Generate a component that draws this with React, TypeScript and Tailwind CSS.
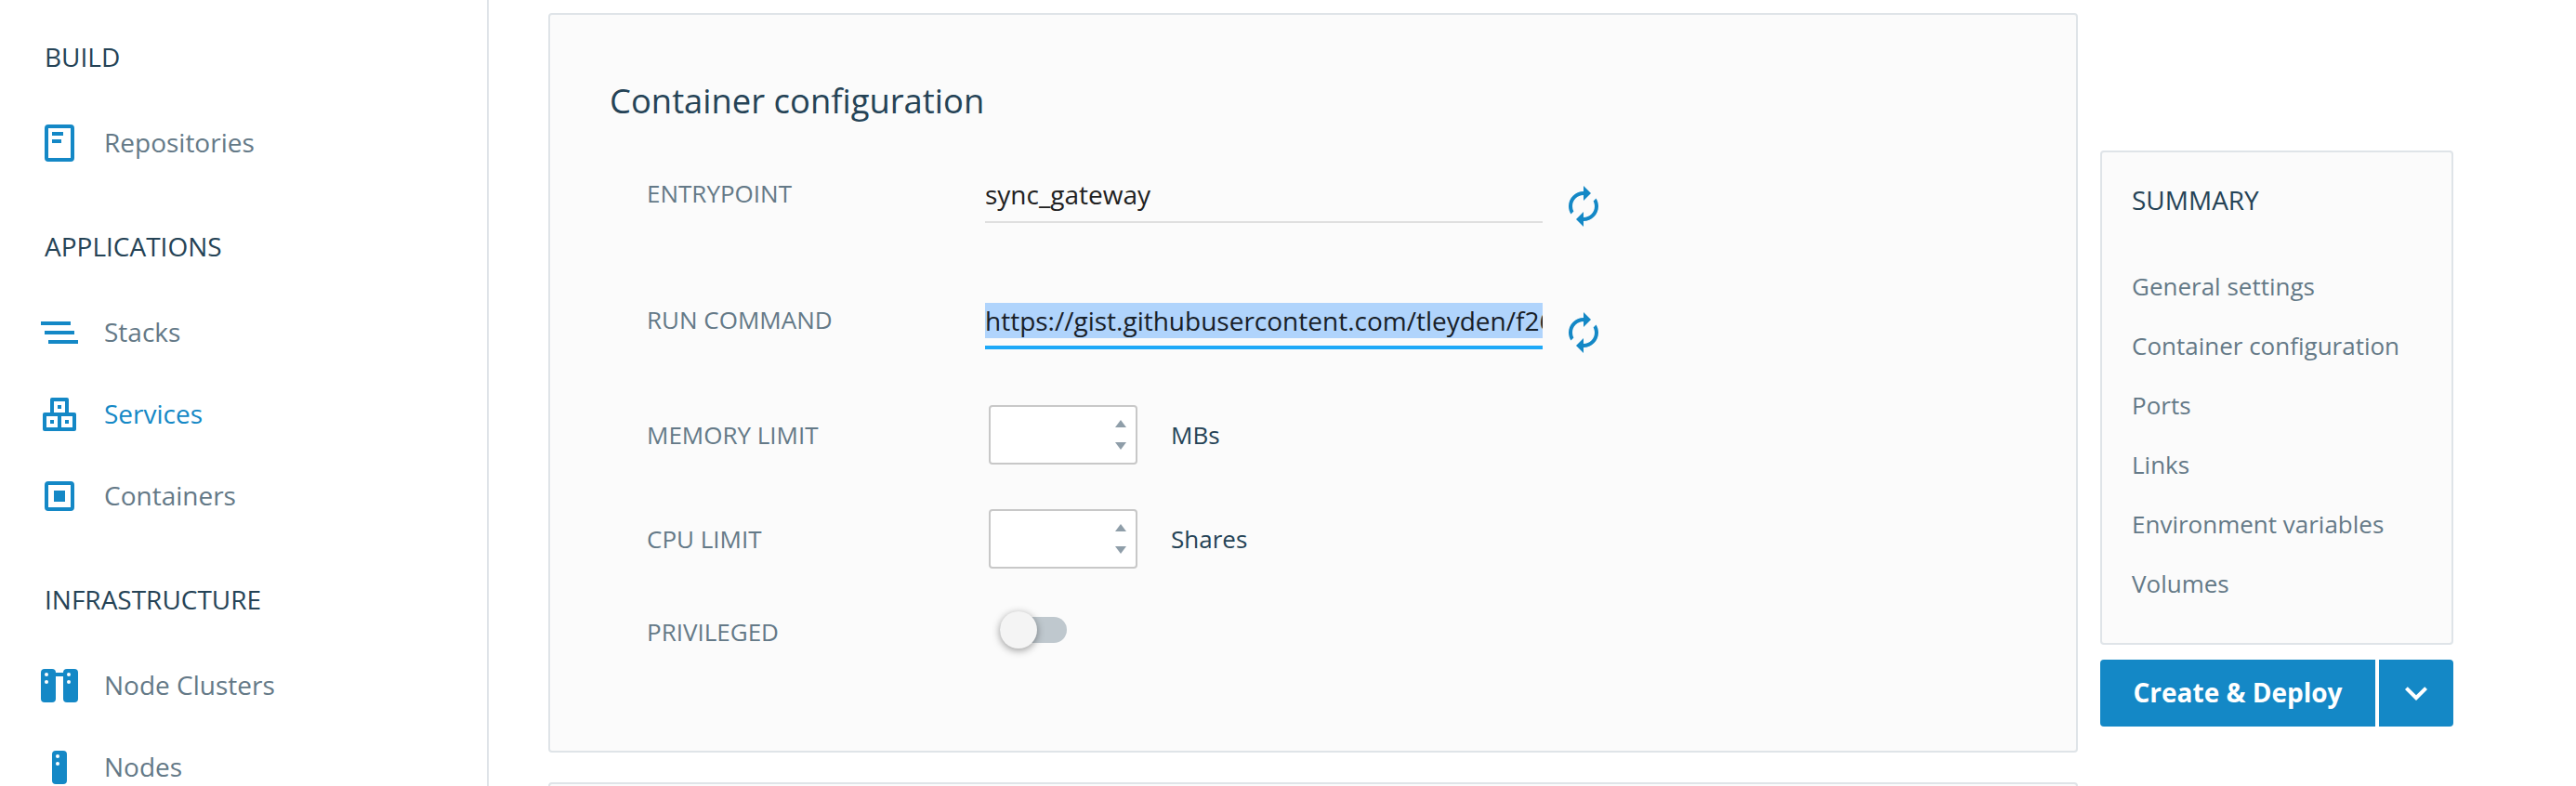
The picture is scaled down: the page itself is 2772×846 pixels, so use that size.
import type { ReactNode } from "react";

type NavItem = { label: string; icon: ReactNode; active?: boolean };
type NavSection = { title: string; items: NavItem[] };

function Icon({ children }: { children: ReactNode }) {
  return (
    <svg viewBox="0 0 40 40" className="size-10 shrink-0 fill-[#1488c6]">
      {children}
    </svg>
  );
}

const RepositoryIcon = (
  <Icon>
    <rect x="6" y="2" width="28" height="36" rx="2" fill="none" stroke="#1488c6" strokeWidth="4" />
    <rect x="12" y="8" width="12" height="4" />
    <rect x="12" y="16" width="10" height="4" />
  </Icon>
);

const StackIcon = (
  <Icon>
    <rect x="0" y="8" width="32" height="4" />
    <rect x="4" y="18" width="32" height="4" />
    <rect x="8" y="28" width="32" height="4" />
  </Icon>
);

const ServiceIcon = (
  <Icon>
    <rect x="10" y="2" width="20" height="22" rx="2" />
    <rect x="2" y="18" width="36" height="20" rx="2" />
    <path fill="#fff" d="M14 6h12v12H14zM6 22h12v12H6zM22 22h12v12H22z" />
    <path d="M18 10h4v4h-4zM10 26h4v4h-4zM26 26h4v4h-4z" />
  </Icon>
);

const ContainerIcon = (
  <Icon>
    <rect x="6" y="6" width="28" height="28" rx="2" fill="none" stroke="#1488c6" strokeWidth="4" />
    <rect x="14" y="14" width="12" height="12" />
  </Icon>
);

const ClusterIcon = (
  <Icon>
    <rect x="0" y="2" width="16" height="36" rx="4" />
    <rect x="24" y="2" width="16" height="36" rx="4" />
    <rect x="14" y="6" width="12" height="4" />
    <g fill="#fff">
      <circle cx="6" cy="8" r="2" />
      <circle cx="6" cy="16" r="2" />
      <circle cx="30" cy="8" r="2" />
      <circle cx="30" cy="16" r="2" />
    </g>
  </Icon>
);

const NodeIcon = (
  <Icon>
    <rect x="12" y="2" width="16" height="36" rx="4" />
    <circle cx="18" cy="8" r="2" fill="#fff" />
    <circle cx="18" cy="16" r="2" fill="#fff" />
  </Icon>
);

const sections: NavSection[] = [
  { title: "BUILD", items: [{ label: "Repositories", icon: RepositoryIcon }] },
  {
    title: "APPLICATIONS",
    items: [
      { label: "Stacks", icon: StackIcon },
      { label: "Services", icon: ServiceIcon, active: true },
      { label: "Containers", icon: ContainerIcon },
    ],
  },
  {
    title: "INFRASTRUCTURE",
    items: [
      { label: "Node Clusters", icon: ClusterIcon },
      { label: "Nodes", icon: NodeIcon },
    ],
  },
];

const summaryLinks = [
  "General settings",
  "Container configuration",
  "Ports",
  "Links",
  "Environment variables",
  "Volumes",
];

function Sidebar() {
  return (
    <nav className="h-full w-[526px] shrink-0 overflow-hidden border-r-2 border-[#dfe3e8] pt-[41px]">
      {sections.map((section) => (
        <section key={section.title} className="mb-[47px]">
          <h2 className="mb-[29px] pl-12 text-[28px] leading-10 text-[#254356]">{section.title}</h2>
          <ul>
            {section.items.map((item) => (
              <li
                key={item.label}
                className={`flex h-[88px] items-center gap-7 pl-11 text-[28px] ${
                  item.active ? "text-[#1488c6]" : "text-[#647987]"
                }`}
              >
                {item.icon}
                <a className="pb-0.5 leading-10">{item.label}</a>
              </li>
            ))}
          </ul>
        </section>
      ))}
    </nav>
  );
}

function Label({ children }: { children: ReactNode }) {
  return <label className="w-[364px] shrink-0 text-[26px] leading-9 text-[#647987]">{children}</label>;
}

function ResetButton() {
  return (
    <button className="mt-2 ml-5 size-12">
      <svg viewBox="0 0 24 24" className="size-12 fill-[#1488c6]">
        <path d="M12 6v3l4-4-4-4v3c-4.42 0-8 3.58-8 8 0 1.57.46 3.03 1.24 4.26L6.7 14.8A5.87 5.87 0 0 1 6 12c0-3.31 2.69-6 6-6zm6.76 1.74L17.3 9.2c.44.84.7 1.79.7 2.8 0 3.31-2.69 6-6 6v-3l-4 4 4 4v-3c4.42 0 8-3.58 8-8 0-1.57-.46-3.03-1.24-4.26z" />
      </svg>
    </button>
  );
}

function NumberField({ unit }: { unit: string }) {
  return (
    <>
      <div className="ml-1 flex h-16 w-40 items-center justify-end rounded border-2 border-[#c8c8c8] bg-white pr-2.5">
        <svg viewBox="0 0 12 32" className="h-8 w-3 fill-[#8f9ea9]">
          <path d="M6 0l6 8H0zM0 24h12l-6 8z" />
        </svg>
      </div>
      <span className="ml-9 text-[26px] leading-9 text-[#254356]">{unit}</span>
    </>
  );
}

function ConfigCard() {
  return (
    <section className="h-[796px] shrink-0 rounded border-2 border-[#dfe4e8] bg-[#fbfbfb] pt-[68px] pl-16">
      <h1 className="text-[36.4px] leading-[48px] text-[#254356]">Container configuration</h1>
      <div className="mt-[58px] pl-10">
        <div className="flex h-[136px] items-start">
          <Label>ENTRYPOINT</Label>
          <div className="h-[50px] w-[600px] border-b-2 border-[#dfdfdf] text-[28px] leading-[38px] text-[#212121]">
            sync_gateway
          </div>
          <ResetButton />
        </div>
        <div className="flex h-[110px] items-start">
          <Label>RUN COMMAND</Label>
          <div className="h-[50px] w-[600px] border-b-4 border-[#1ea9f8] text-[28px] leading-[38px] text-[#182028]">
            <div className="overflow-hidden bg-[#b0d4fc] whitespace-nowrap">
              https://gist.githubusercontent.com/tleyden/f26
            </div>
          </div>
          <ResetButton />
        </div>
        <div className="flex h-16 items-center">
          <Label>MEMORY LIMIT</Label>
          <NumberField unit="MBs" />
        </div>
        <div className="mt-12 flex h-16 items-center">
          <Label>CPU LIMIT</Label>
          <NumberField unit="Shares" />
        </div>
        <div className="mt-[46px] flex h-10 items-center">
          <div className="flex pt-1">
            <Label>PRIVILEGED</Label>
          </div>
          <button className="ml-4 flex h-7 w-[72px] items-center rounded-full bg-[#bfc8ce]">
            <span className="size-10 shrink-0 rounded-full bg-[#f4f4f4] shadow-[0_2px_8px_rgba(0,0,0,0.4)]" />
          </button>
        </div>
      </div>
    </section>
  );
}

function Summary() {
  return (
    <aside className="mt-[162px] ml-6 w-[380px] shrink-0">
      <div className="h-[532px] rounded border-2 border-[#dfe4e8] bg-[#fbfbfb] pt-[31px] pl-8">
        <h2 className="mb-[41px] text-[28px] leading-10 text-[#254356]">SUMMARY</h2>
        <ul className="text-[26px] leading-[64px] text-[#647987]">
          {summaryLinks.map((link) => (
            <li key={link}>{link}</li>
          ))}
        </ul>
      </div>
      <div className="mt-4 flex h-[72px] gap-1">
        <button className="w-[296px] rounded-l bg-[#1488c6] pb-0.5 text-[28px] font-bold text-white">
          Create &amp; Deploy
        </button>
        <button className="flex w-20 items-center justify-center rounded-r bg-[#1488c6]">
          <svg viewBox="0 0 24 24" className="size-12 fill-white">
            <path d="M16.59 8.59L12 13.17 7.41 8.59 6 10l6 6 6-6z" />
          </svg>
        </button>
      </div>
    </aside>
  );
}

export default function App() {
  return (
    <div className="flex h-[846px] w-[2772px] overflow-hidden bg-white font-['Open_Sans','Noto_Sans',sans-serif]">
      <Sidebar />
      <main className="ml-16 flex w-[1646px] shrink-0 flex-col gap-8 pt-3.5">
        <ConfigCard />
        <section className="h-40 shrink-0 rounded border-2 border-[#dfe4e8] bg-[#fbfbfb]" />
      </main>
      <Summary />
    </div>
  );
}
